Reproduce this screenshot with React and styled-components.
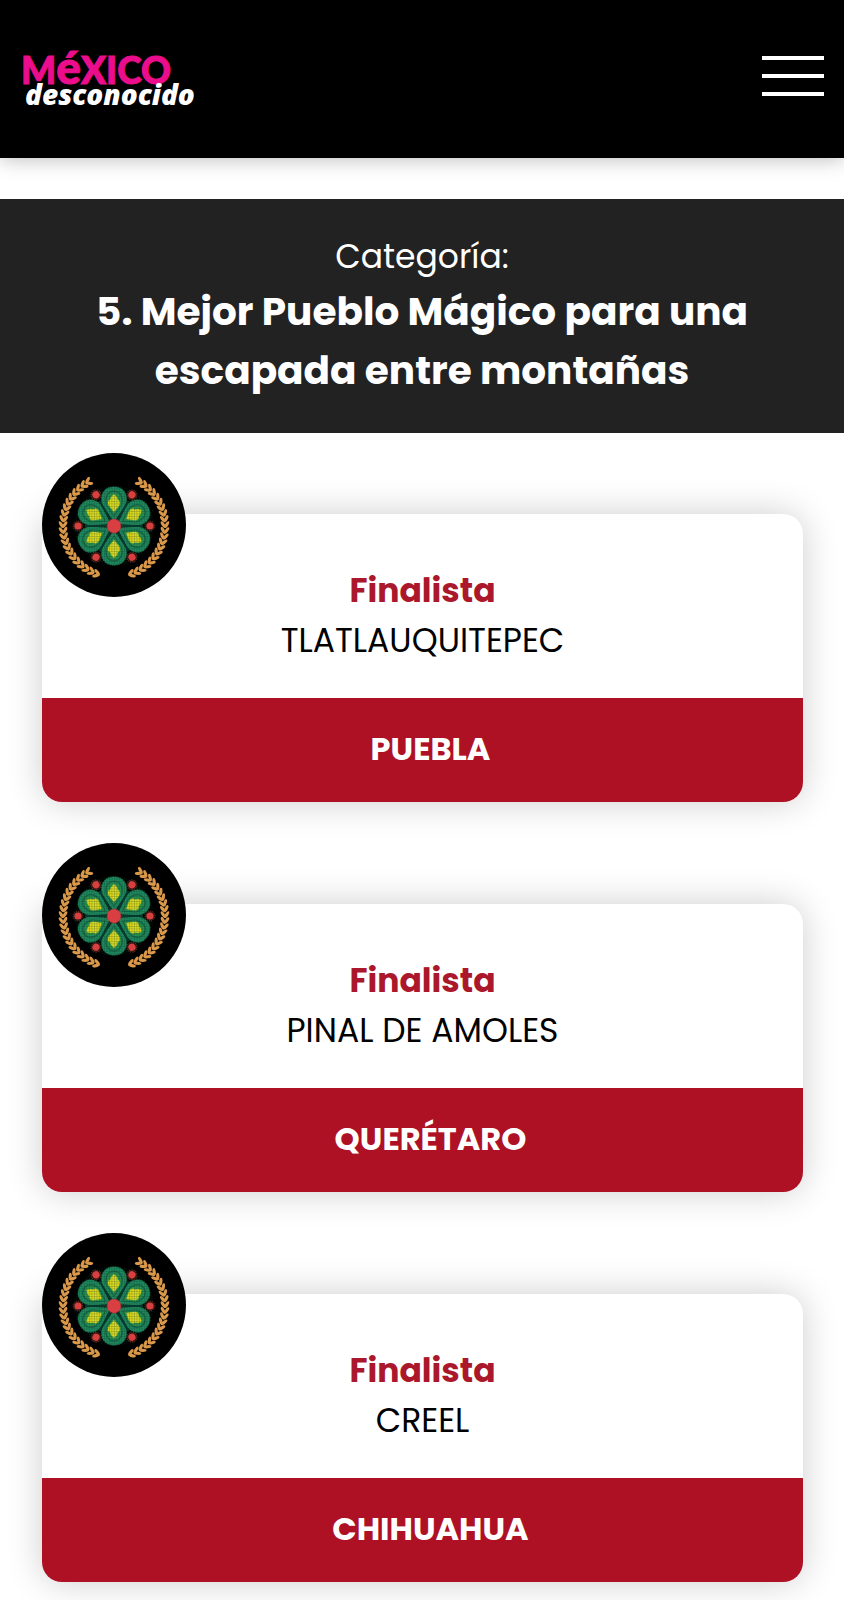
import React from 'react';
import styled, { createGlobalStyle } from 'styled-components';

const finalists = [
  { town: 'TLATLAUQUITEPEC', state: 'PUEBLA' },
  { town: 'PINAL DE AMOLES', state: 'QUERÉTARO' },
  { town: 'CREEL', state: 'CHIHUAHUA' },
];

const petals = [0, 60, 120, 180, 240, 300];
const leaves = Array.from({ length: 21 }, (_, i) => 30 + i * 6.5);

const Branch = () => (
  <g fill="#d9984a">
    {leaves.map((angle) => (
      <g key={angle} transform={`rotate(${angle}) translate(0 -51)`}>
        <ellipse cy="-1.8" rx="3.8" ry="1.6" transform="rotate(32 0 -1.8)" />
        <ellipse cy="1.8" rx="3.8" ry="1.6" transform="rotate(-32 0 1.8)" />
      </g>
    ))}
  </g>
);

const Medal = () => (
  <Badge viewBox="0 0 144 144" role="img" aria-label="Medalla de finalista">
    <defs>
      <pattern id="beads" width="2.5" height="2.5" patternUnits="userSpaceOnUse">
        <path d="M0 0H2.5M0 0V2.5" stroke="#06351f" strokeWidth="0.8" opacity="0.5" />
      </pattern>
    </defs>
    <circle cx="72" cy="72" r="72" fill="#000" />
    <g transform="translate(72 73)">
      <Branch />
      <g transform="scale(-1 1)">
        <Branch />
      </g>
      {petals.map((angle) => (
        <g key={angle} transform={`rotate(${angle})`}>
          <path
            d="M0 -4L-11 -20C-14 -26 -13 -33 -8 -37C-3 -40 3 -40 8 -37C13 -33 14 -26 11 -20Z"
            fill="#1f8a5f"
            stroke="#1c6a4a"
            strokeWidth="1"
            strokeDasharray="1.3 1.2"
          />
          <path
            d="M0 -9L-8 -21C-10 -27 -8 -32 -5 -34C-2 -36 2 -36 5 -34C8 -32 10 -27 8 -21Z"
            fill="#166a4c"
          />
          <path
            d="M0 -11L-7 -21C-8 -26 -7 -31 -4 -33C-2 -34 2 -34 4 -33C7 -31 8 -26 7 -21Z"
            fill="#2b9150"
          />
          <path
            d="M0 -14L-5 -20C-7 -23 -6 -26 -4 -26L-3 -29L0 -32L3 -29L4 -26C6 -26 7 -23 5 -20Z"
            fill="#ded91f"
          />
        </g>
      ))}
      {petals.map((angle) => (
        <path
          key={angle}
          d="M0 -7V-29"
          stroke="#07382f"
          strokeWidth="2"
          transform={`rotate(${angle + 30})`}
        />
      ))}
      <circle r="40" fill="url(#beads)" />
      {petals.map((angle) => (
        <g key={angle} transform={`rotate(${angle + 30}) translate(0 -36)`}>
          <circle r="5" fill="#2c1512" stroke="#6d3626" strokeWidth="1" strokeDasharray="1 1.2" />
          <circle r="3.6" fill="#d8403f" />
        </g>
      ))}
      <circle r="7" fill="#d93f42" stroke="#a93035" strokeWidth="1" strokeDasharray="1 1" />
    </g>
  </Badge>
);

const App = () => {
  return (
    <>
      <GlobalStyle />
      <Header>
        <Logo href="#" aria-label="México desconocido">
          <LogoTop>
            M<LogoLow>é</LogoLow>XICO
          </LogoTop>
          <LogoBottom>desconocido</LogoBottom>
        </Logo>
        <MenuButton type="button" aria-label="Menú">
          <MenuLine />
          <MenuLine />
          <MenuLine />
        </MenuButton>
      </Header>
      <main>
        <Category>
          <CategoryLabel>Categoría:</CategoryLabel>
          <CategoryTitle>5. Mejor Pueblo Mágico para una escapada entre montañas</CategoryTitle>
        </Category>
        <List>
          {finalists.map(({ town, state }) => (
            <Item key={town}>
              <Medal />
              <Card>
                <CardBody>
                  <Place>Finalista</Place>
                  <Town>{town}</Town>
                </CardBody>
                <State>{state}</State>
              </Card>
            </Item>
          ))}
        </List>
      </main>
    </>
  );
};

const GlobalStyle = createGlobalStyle`
  * {
    box-sizing: border-box;
  }
  body {
    margin: 0;
    background: #fff;
    color: #000;
    font-family: Poppins, Inter, sans-serif;
    overflow-x: hidden;
  }
`;

const Header = styled.header`
  display: flex;
  align-items: center;
  justify-content: space-between;
  height: 158px;
  padding: 0 20px 6px 20px;
  background: #000;
  box-shadow: 0 0 20px rgba(0, 0, 0, 0.3);
`;

const Logo = styled.a`
  display: flex;
  flex-direction: column;
  text-decoration: none;
`;

const LogoTop = styled.span`
  padding-left: 1px;
  color: #ec0d8c;
  font-family: Lato, sans-serif;
  font-weight: 900;
  font-size: 37px;
  line-height: 34px;
  -webkit-text-stroke: 1px #ec0d8c;
`;

const LogoLow = styled.span`
  font-size: 46px;
  line-height: 32px;
`;

const LogoBottom = styled.span`
  padding-left: 5px;
  color: #fff;
  font-family: 'Open Sans', sans-serif;
  font-style: italic;
  font-weight: 800;
  font-size: 28px;
  line-height: 14px;
`;

const MenuButton = styled.button`
  display: flex;
  flex-direction: column;
  gap: 14px;
  width: 62px;
  padding: 0;
  border: 0;
  background: none;
  cursor: pointer;
`;

const MenuLine = styled.span`
  height: 4px;
  background: #fff;
`;

const Category = styled.section`
  margin-top: 41px;
  padding: 33px 80px;
  background: #222;
  color: #fff;
  text-align: center;
`;

const CategoryLabel = styled.p`
  margin: 0;
  font-size: 33px;
  line-height: 50px;
`;

const CategoryTitle = styled.h1`
  margin: 0;
  font-weight: 700;
  font-size: 39px;
  line-height: 59px;
`;

const List = styled.ul`
  display: flex;
  flex-direction: column;
  gap: 41px;
  margin: 0;
  padding: 20px 41px 41px 42px;
  list-style: none;
`;

const Item = styled.li`
  position: relative;
  padding-top: 61px;
`;

const Badge = styled.svg`
  position: absolute;
  top: 0;
  left: 0;
  width: 144px;
  height: 144px;
`;

const Card = styled.article`
  border-radius: 20px;
  background: #fff;
  box-shadow: 0 0 36px rgba(0, 0, 0, 0.2);
  text-align: center;
`;

const CardBody = styled.div`
  padding: 52px 16px 32px;
`;

const Place = styled.h2`
  margin: 0;
  color: #ab182b;
  font-weight: 700;
  font-size: 33px;
  line-height: 50px;
`;

const Town = styled.p`
  margin: 0;
  font-size: 33px;
  line-height: 50px;
`;

const State = styled.p`
  margin: 0;
  padding: 26px 0 28px 16px;
  border-radius: 0 0 20px 20px;
  background: #ae1124;
  color: #fff;
  font-weight: 700;
  font-size: 32px;
  line-height: 50px;
`;

export default App;
